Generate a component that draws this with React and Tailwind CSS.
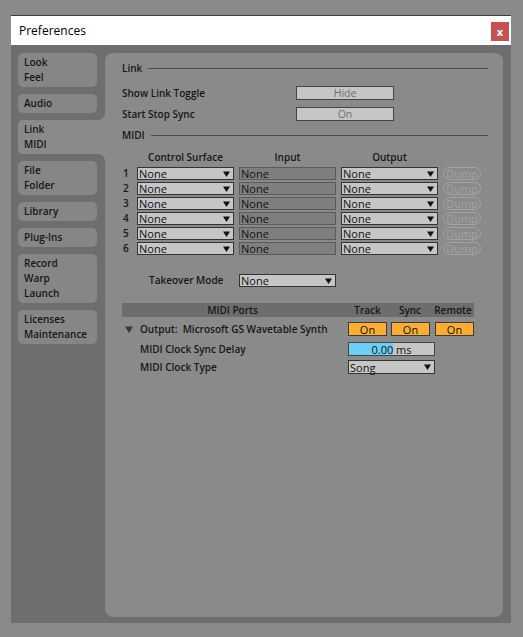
import React from "react";

const font = { fontFamily: "'Open Sans', 'Noto Sans', sans-serif" };

function Tab({ lines, selected }) {
  if (selected) {
    return (
      <div className="relative bg-[#8a8a8a] rounded-l-[5px] mr-[-8px] px-[6px] py-[2px] leading-[15px]">
        {lines.map((l) => (
          <div key={l}>{l}</div>
        ))}
        <div className="absolute right-0 top-[-8px] w-[8px] h-[8px] bg-[#8a8a8a]">
          <div className="w-full h-full bg-[#6e6e6e] rounded-br-[7px]" />
        </div>
        <div className="absolute right-0 bottom-[-8px] w-[8px] h-[8px] bg-[#8a8a8a]">
          <div className="w-full h-full bg-[#6e6e6e] rounded-tr-[7px]" />
        </div>
      </div>
    );
  }
  return (
    <div className="bg-[#868686] rounded-[5px] px-[6px] py-[2px] leading-[15px]">
      {lines.map((l) => (
        <div key={l}>{l}</div>
      ))}
    </div>
  );
}

function Arrow() {
  return (
    <svg width="7" height="6" viewBox="0 0 7 6" className="shrink-0">
      <path d="M0 0.5 H7 L3.5 6 Z" fill="#111" />
    </svg>
  );
}

function Dropdown({ value, w }) {
  return (
    <div
      className={`${w} h-[13px] bg-[#c6c6c6] border border-[#333] flex items-center justify-between pl-[1px] pr-[3px] text-[11px] font-normal text-[#10101a] leading-none`}
    >
      <span>{value}</span>
      <Arrow />
    </div>
  );
}

function SectionHeader({ title }) {
  return (
    <div className="flex items-center h-[15px] pr-[15px]">
      <span className="font-semibold">{title}</span>
      <div className="flex-1 h-px bg-[#4e4e4e] ml-[6px]" />
    </div>
  );
}

export default function App() {
  const rows = [1, 2, 3, 4, 5, 6];
  return (
    <div
      className="w-[523px] h-[637px] bg-[#8a8a8a] pt-[15px] pl-[11px] text-[10px] text-[#161616]"
      style={font}
    >
      <div className="w-[500px] h-[608px] flex flex-col">
        {/* Title bar */}
        <div className="h-[30px] bg-white border-t border-[#3c3c3c] flex items-center justify-between pl-[8px] pr-[2px]">
          <span className="text-[12px] text-black font-normal">Preferences</span>
          <div className="w-[18px] h-[19px] bg-[#c75050] flex items-center justify-center text-white text-[11px] font-bold leading-none mt-[1px]">
            x
          </div>
        </div>
        {/* Body */}
        <div className="flex-1 bg-[#6e6e6e] flex pt-[8px] pb-[6px] pr-[8px]">
          {/* Sidebar */}
          <div className="w-[94px] pl-[7px] pr-[8px] flex flex-col gap-[7px] font-semibold">
            <Tab lines={["Look", "Feel"]} />
            <Tab lines={["Audio"]} />
            <Tab lines={["Link", "MIDI"]} selected />
            <Tab lines={["File", "Folder"]} />
            <Tab lines={["Library"]} />
            <Tab lines={["Plug-Ins"]} />
            <Tab lines={["Record", "Warp", "Launch"]} />
            <Tab lines={["Licenses", "Maintenance"]} />
          </div>
          {/* Panel */}
          <div className="flex-1 bg-[#8a8a8a] rounded-[8px] pl-[17px] pt-[8px]">
            <SectionHeader title="Link" />
            <div className="mt-[10px] flex items-center h-[14px] font-semibold">
              <span className="w-[174px]">Show Link Toggle</span>
              <div className="w-[98px] h-[14px] bg-[#c6c6c6] border border-[#444] flex items-center justify-center text-[#6e6e6e] font-normal text-[10.5px] leading-none">
                Hide
              </div>
            </div>
            <div className="mt-[7px] flex items-center h-[14px] font-semibold">
              <span className="w-[174px]">Start Stop Sync</span>
              <div className="w-[98px] h-[14px] bg-[#c6c6c6] border border-[#444] flex items-center justify-center text-[#6e6e6e] font-normal text-[10.5px] leading-none">
                On
              </div>
            </div>
            <div className="mt-[7px]">
              <SectionHeader title="MIDI" />
            </div>
            {/* Column headers */}
            <div className="mt-[7px] flex h-[14px] items-center font-semibold">
              <div className="w-[15px]" />
              <div className="w-[97px] text-center">Control Surface</div>
              <div className="w-[5px]" />
              <div className="w-[97px] text-center">Input</div>
              <div className="w-[5px]" />
              <div className="w-[97px] text-center">Output</div>
            </div>
            <div className="mt-[3px] flex flex-col gap-[2px]">
              {rows.map((n) => (
                <div key={n} className="flex items-center h-[13px]">
                  <div className="w-[15px] pl-[1px] font-semibold">{n}</div>
                  <Dropdown value="None" w="w-[97px]" />
                  <div className="w-[5px]" />
                  <div className="w-[97px] h-[13px] bg-[#7f7f7f] border border-[#5a5a5a] flex items-center pl-[1px] text-[11px] text-[#10101a] leading-none">
                    None
                  </div>
                  <div className="w-[5px]" />
                  <Dropdown value="None" w="w-[97px]" />
                  <div className="w-[5px]" />
                  <div className="w-[38px] h-[13px] rounded-full border border-[#a3a3a3] flex items-center justify-center text-[11px] text-[#a3a3a3] leading-none">
                    Dump
                  </div>
                </div>
              ))}
            </div>
            {/* Takeover */}
            <div className="mt-[19px] flex items-center h-[13px]">
              <div className="w-[117px] pl-[27px] font-semibold">Takeover Mode</div>
              <Dropdown value="None" w="w-[97px]" />
            </div>
            {/* MIDI Ports */}
            <div className="mt-[16px] w-[352px] h-[14px] bg-[#6d6d6d] flex items-center font-semibold">
              <div className="w-[221px] text-center">MIDI Ports</div>
              <div className="w-[5px]" />
              <div className="w-[39px] text-center">Track</div>
              <div className="w-[4px]" />
              <div className="w-[38px] text-center">Sync</div>
              <div className="w-[5px]" />
              <div className="w-[38px] text-center">Remote</div>
            </div>
            <div className="mt-[5px] flex items-center h-[14px] font-semibold">
              <div className="w-[18px] pl-[3px]">
                <svg width="8" height="7" viewBox="0 0 8 7">
                  <path d="M0 0.5 H8 L4 7 Z" fill="#3a3a3a" />
                </svg>
              </div>
              <div className="w-[208px]">Output:&nbsp; Microsoft GS Wavetable Synth</div>
              {["On", "On", "On"].map((t, i) => (
                <React.Fragment key={i}>
                  {i > 0 && <div className={i === 1 ? "w-[4px]" : "w-[5px]"} />}
                  <div className="w-[39px] h-[14px] bg-[#fdad34] border border-[#3a3a3a] flex items-center justify-center font-normal text-[11px] text-[#111] leading-none">
                    {t}
                  </div>
                </React.Fragment>
              ))}
            </div>
            <div className="mt-[6px] flex items-center h-[14px] font-semibold">
              <div className="w-[226px] pl-[18px]">MIDI Clock Sync Delay</div>
              <div className="relative w-[87px] h-[14px] bg-[#c6c6c6] border border-[#444] overflow-hidden">
                <div className="w-[44px] h-full bg-[#6dcff6]" />
                <div className="absolute inset-0 flex items-center justify-center font-normal text-[11px] text-[#111] leading-none">
                  0.00 ms
                </div>
              </div>
            </div>
            <div className="mt-[4px] flex items-center h-[14px] font-semibold">
              <div className="w-[226px] pl-[18px]">MIDI Clock Type</div>
              <Dropdown value="Song" w="w-[87px] !h-[14px]" />
            </div>
          </div>
        </div>
      </div>
    </div>
  );
}
